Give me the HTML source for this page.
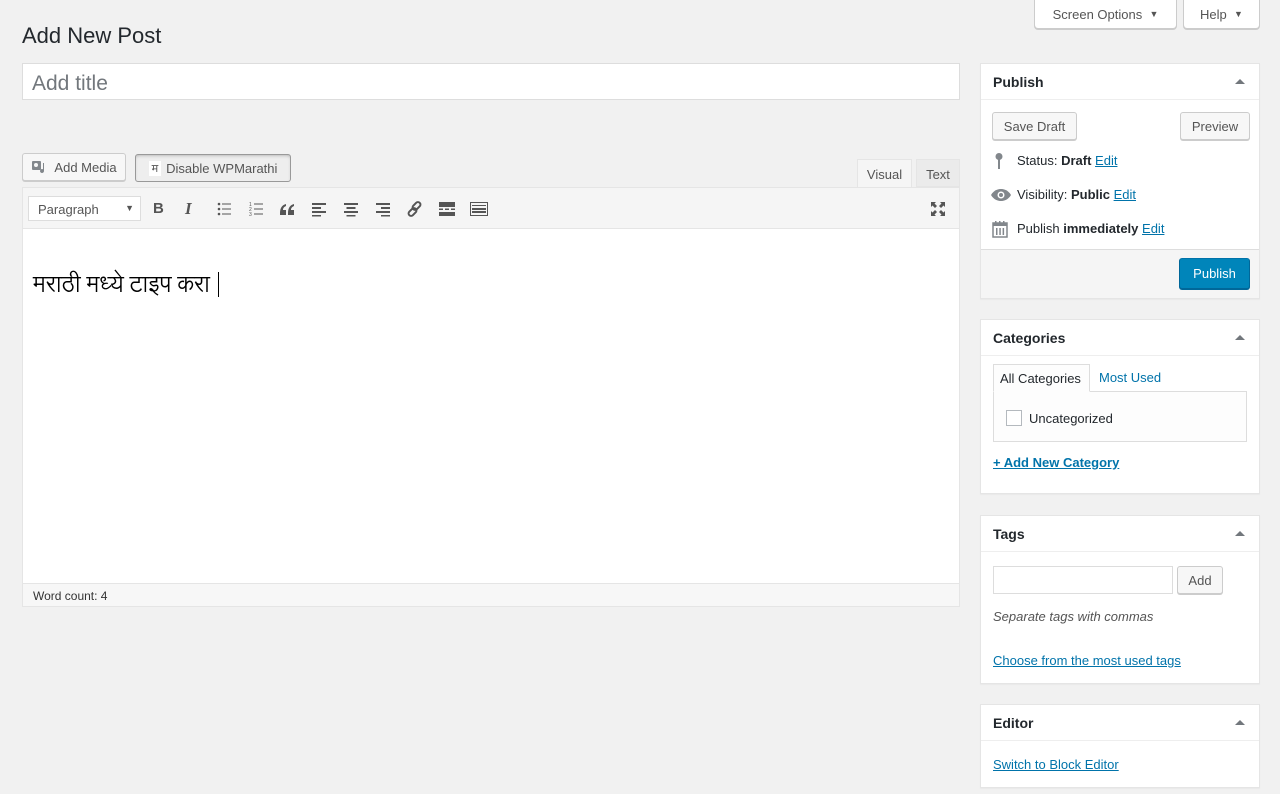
<!DOCTYPE html>
<html><head><meta charset="utf-8"><style>
*{box-sizing:border-box}
body{margin:0;background:#f1f1f1;font-family:"Liberation Sans",sans-serif;font-size:13px;color:#23282d;width:1280px;height:794px;overflow:hidden;position:relative}
.abs{position:absolute}
.btn{position:absolute;background:#f7f7f7;border:1px solid #ccc;border-radius:3px;color:#555;font-size:13px;display:flex;align-items:center;justify-content:center;box-shadow:0 1px 0 #ccc}
.box{position:absolute;left:980px;width:280px;background:#fff;border:1px solid #e5e5e5;box-shadow:0 1px 1px rgba(0,0,0,.04)}
.box h2{margin:0;height:36px;border-bottom:1px solid #eee;font-size:14px;font-weight:bold;padding:10px 12px;position:relative}
.box h2:after{content:"";position:absolute;right:14px;top:15px;border:5px solid transparent;border-bottom:5px solid #72777c;border-top:0}
a{color:#0073aa;text-decoration:underline}
.ic{position:absolute;top:199px;width:20px;height:20px}
</style></head><body>
<div class="btn" style="left:1034px;top:0;width:143px;height:29px;border-top:0;border-radius:0 0 4px 4px;background:#fff">Screen Options&nbsp;&nbsp;<span style="font-size:9px">▼</span></div>
<div class="btn" style="left:1183px;top:0;width:77px;height:29px;border-top:0;border-radius:0 0 4px 4px;background:#fff">Help&nbsp;&nbsp;<span style="font-size:9px">▼</span></div>
<div class="abs" style="left:22px;top:23px;font-size:22px;color:#23282d">Add New Post</div>
<div class="abs" style="left:22px;top:63px;width:938px;height:37px;background:#fff;border:1px solid #ddd;font-size:21px;color:#72777c;padding:8px 9px">Add title</div>
<div class="btn" style="left:22px;top:153px;width:104px;height:28px"><svg width="18" height="16" viewBox="0 0 18 16" style="margin-right:5px"><rect x="1" y="2" width="9" height="9" rx="1" fill="#82878c"/><circle cx="5" cy="6" r="2" fill="#f7f7f7"/><path d="M13 4v8a2 2 0 1 1-1-1.7V4z" fill="#82878c"/></svg>Add Media</div>
<div class="btn" style="left:135px;top:154px;width:156px;height:28px;background:#eee;border-color:#999;box-shadow:inset 0 2px 5px -3px rgba(0,0,0,.5)"><span style="background:#fff;font-size:11px;padding:0 3px;margin-right:5px">म</span>Disable WPMarathi</div>
<div class="abs" style="left:857px;top:159px;width:55px;height:29px;background:#f5f5f5;border:1px solid #e5e5e5;border-bottom:0;text-align:center;padding-top:7px;color:#555">Visual</div>
<div class="abs" style="left:916px;top:159px;width:44px;height:28px;background:#ebebeb;border:1px solid #e5e5e5;text-align:center;padding-top:7px;color:#555">Text</div>
<div class="abs" style="left:22px;top:187px;width:938px;height:420px;border:1px solid #e5e5e5;background:#fff"></div>
<div class="abs" style="left:23px;top:188px;width:936px;height:41px;background:#f5f5f5;border-bottom:1px solid #e5e5e5"></div>
<div class="abs" style="left:28px;top:196px;width:113px;height:25px;background:#fff;border:1px solid #ddd;padding:5px 9px;color:#555">Paragraph<span style="position:absolute;right:6px;top:6px;font-size:9px">▼</span></div>
<div class="abs" style="left:153px;top:200px;font-weight:bold;font-size:15px;color:#555">B</div>
<div class="abs" style="left:185px;top:199px;font-style:italic;font-size:17px;color:#555;font-family:'Liberation Serif',serif;font-weight:bold">I</div>
<svg class="ic" style="left:214px" viewBox="0 0 20 20"><g fill="#555"><circle cx="5" cy="5" r="1.3"/><circle cx="5" cy="10" r="1.3"/><circle cx="5" cy="15" r="1.3"/><rect x="8" y="4.5" width="9" height="1"/><rect x="8" y="9.5" width="9" height="1"/><rect x="8" y="14.5" width="9" height="1"/></g></svg>
<svg class="ic" style="left:246px" viewBox="0 0 20 20"><g fill="#555"><text x="3" y="7" font-size="5">1</text><text x="3" y="12" font-size="5">2</text><text x="3" y="17" font-size="5">3</text><rect x="8" y="4.5" width="9" height="1"/><rect x="8" y="9.5" width="9" height="1"/><rect x="8" y="14.5" width="9" height="1"/></g></svg>
<svg class="ic" style="left:277px" viewBox="0 0 20 20"><g fill="#555"><path d="M3 14c0-5 2-8 6-9v2c-2 1-3 2-3 4h3v5H3z"/><path d="M11 14c0-5 2-8 6-9v2c-2 1-3 2-3 4h3v5h-6z"/></g></svg>
<svg class="ic" style="left:309px" viewBox="0 0 20 20"><g fill="#555"><rect x="3" y="4" width="14" height="2"/><rect x="3" y="8" width="9" height="2"/><rect x="3" y="12" width="14" height="2"/><rect x="3" y="16" width="9" height="1.5"/></g></svg>
<svg class="ic" style="left:341px" viewBox="0 0 20 20"><g fill="#555"><rect x="3" y="4" width="14" height="2"/><rect x="5.5" y="8" width="9" height="2"/><rect x="3" y="12" width="14" height="2"/><rect x="5.5" y="16" width="9" height="1.5"/></g></svg>
<svg class="ic" style="left:373px" viewBox="0 0 20 20"><g fill="#555"><rect x="3" y="4" width="14" height="2"/><rect x="8" y="8" width="9" height="2"/><rect x="3" y="12" width="14" height="2"/><rect x="8" y="16" width="9" height="1.5"/></g></svg>
<svg class="ic" style="left:405px" viewBox="0 0 20 20"><g fill="none" stroke="#555" stroke-width="2"><rect x="9" y="2.5" width="5" height="9" rx="2.5" transform="rotate(45 11.5 7)"/><rect x="5" y="8.5" width="5" height="9" rx="2.5" transform="rotate(45 7.5 13)"/></g></svg>
<svg class="ic" style="left:437px" viewBox="0 0 20 20"><g fill="#555"><rect x="2" y="3" width="16" height="5"/><rect x="2" y="9.5" width="4" height="1.5"/><rect x="8" y="9.5" width="4" height="1.5"/><rect x="14" y="9.5" width="4" height="1.5"/><rect x="2" y="13" width="16" height="4"/></g></svg>
<svg class="ic" style="left:469px" viewBox="0 0 20 20"><rect x="1.5" y="3.5" width="17" height="13" fill="none" stroke="#555"/><g fill="#555"><rect x="3" y="6" width="14" height="1"/><rect x="3" y="9" width="14" height="2"/><rect x="3" y="12" width="14" height="2"/></g></svg>
<svg class="ic" style="left:928px" viewBox="0 0 20 20"><path d="M3 3h5L6.5 4.5 9 7 7 9 4.5 6.5 3 8zM17 3v5l-1.5-1.5L13 9 11 7l2.5-2.5L12 3zM3 17v-5l1.5 1.5L7 11l2 2-2.5 2.5L8 17zM17 17h-5l1.5-1.5L11 13l2-2 2.5 2.5L17 12z" fill="#555"/></svg>
<div class="abs" style="left:33px;top:264px;font-size:23px;color:#000;font-family:'Liberation Serif','Lohit Devanagari','Noto Sans Devanagari',serif">मराठी मध्ये टाइप करा&nbsp;<span style="border-left:1px solid #000;margin-left:2px"> </span></div>
<div class="abs" style="left:23px;top:583px;width:936px;height:23px;background:#f7f7f7;border-top:1px solid #e5e5e5;font-size:12px;padding:5px 10px;color:#333">Word count: 4</div>

<div class="box" style="top:63px;height:236px">
<h2>Publish</h2>
<div class="btn" style="left:11px;top:48px;width:85px;height:28px">Save Draft</div>
<div class="btn" style="left:199px;top:48px;width:70px;height:28px">Preview</div>
<svg class="abs" style="left:12px;top:88px" width="12" height="18" viewBox="0 0 12 18"><circle cx="6" cy="4.5" r="3.5" fill="#82878c"/><rect x="5" y="6" width="2" height="11" fill="#82878c"/></svg>
<div class="abs" style="left:36px;top:89px">Status: <b>Draft</b> <a>Edit</a></div>
<svg class="abs" style="left:9px;top:124px" width="22" height="14" viewBox="0 0 22 14"><path d="M1 7C4 2 8 1 11 1s7 1 10 6c-3 5-7 6-10 6S4 12 1 7z" fill="#82878c"/><circle cx="11" cy="7" r="3.5" fill="#fff"/><circle cx="11" cy="7" r="2" fill="#82878c"/></svg>
<div class="abs" style="left:36px;top:123px">Visibility: <b>Public</b> <a>Edit</a></div>
<svg class="abs" style="left:11px;top:156px" width="16" height="18" viewBox="0 0 16 18"><rect x="1" y="3" width="14" height="14" fill="none" stroke="#82878c" stroke-width="1.5"/><rect x="1" y="3" width="14" height="3" fill="#82878c"/><g fill="#82878c"><rect x="3" y="1" width="1.5" height="3"/><rect x="7" y="1" width="1.5" height="3"/><rect x="11" y="1" width="1.5" height="3"/><rect x="4" y="8" width="1.5" height="7"/><rect x="7.3" y="8" width="1.5" height="7"/><rect x="10.6" y="8" width="1.5" height="7"/></g></svg>
<div class="abs" style="left:36px;top:157px">Publish <b>immediately</b> <a>Edit</a></div>
<div class="abs" style="left:0;top:185px;width:278px;height:49px;background:#f5f5f5;border-top:1px solid #ddd"></div>
<div class="btn" style="left:198px;top:194px;width:71px;height:31px;background:#0085ba;border-color:#0073aa #006799 #006799;color:#fff;box-shadow:0 1px 0 #006799">Publish</div>
</div>

<div class="box" style="top:319px;height:175px">
<h2>Categories</h2>
<div class="abs" style="left:12px;top:71px;width:254px;height:51px;border:1px solid #ddd;background:#fdfdfd"></div>
<div class="abs" style="left:12px;top:44px;width:97px;height:28px;border:1px solid #ddd;border-bottom:1px solid #fdfdfd;background:#fdfdfd;padding:6px 6px;color:#23282d">All Categories</div>
<div class="abs" style="left:118px;top:50px;color:#0073aa">Most Used</div>
<div class="abs" style="left:25px;top:90px;width:16px;height:16px;border:1px solid #b4b9be;background:#fff"></div>
<div class="abs" style="left:48px;top:91px">Uncategorized</div>
<a class="abs" style="left:12px;top:135px;font-weight:bold;color:#0073aa">+ Add New Category</a>
</div>

<div class="box" style="top:515px;height:169px">
<h2>Tags</h2>
<div class="abs" style="left:12px;top:50px;width:180px;height:28px;border:1px solid #ddd;background:#fff"></div>
<div class="btn" style="left:196px;top:50px;width:46px;height:28px">Add</div>
<div class="abs" style="left:12px;top:93px;font-style:italic;color:#555">Separate tags with commas</div>
<a class="abs" style="left:12px;top:137px">Choose from the most used tags</a>
</div>

<div class="box" style="top:704px;height:84px">
<h2>Editor</h2>
<a class="abs" style="left:12px;top:52px">Switch to Block Editor</a>
</div>
</body></html>
